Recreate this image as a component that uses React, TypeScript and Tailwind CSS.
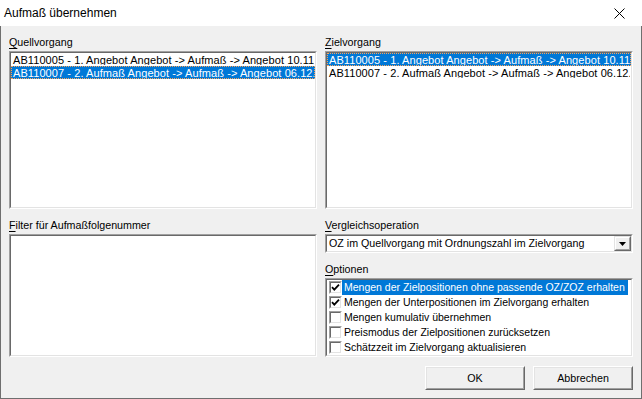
import React from "react";

function Sunken({ className = "", innerClassName = "", children }: { className?: string; innerClassName?: string; children?: React.ReactNode }) {
  return (
    <div className={"flex border border-t-[#a0a0a0] border-l-[#a0a0a0] border-b-white border-r-white " + className}>
      <div className={"flex-1 min-w-0 border border-t-[#696969] border-l-[#696969] border-b-[#e3e3e3] border-r-[#e3e3e3] bg-white overflow-hidden " + innerClassName}>
        {children}
      </div>
    </div>
  );
}

function Label({ first, rest }: { first: string; rest: string }) {
  return (
    <div className="h-[17px] leading-[16px] text-[10.7px] text-black whitespace-nowrap">
      <span className="underline underline-offset-[2px] decoration-1">{first}</span>
      {rest}
    </div>
  );
}

function ListRow({ text, selected }: { text: string; selected?: boolean }) {
  return (
    <div
      className={
        "h-[13px] leading-[12px] pl-[1px] whitespace-nowrap overflow-hidden text-[11px] tracking-[0.08px] border border-dotted " +
        (selected ? "bg-[#0078d7] text-white border-[#f7a35c]" : "text-black border-transparent")
      }
    >
      {text}
    </div>
  );
}

function CheckRow({ text, checked, selected }: { text: string; checked?: boolean; selected?: boolean }) {
  return (
    <div className="h-[15px] flex items-center">
      <div className="ml-[2px] w-[13px] h-[13px] flex border border-t-[#a0a0a0] border-l-[#a0a0a0] border-b-white border-r-white">
        <div className="flex-1 flex items-center justify-center border border-t-[#696969] border-l-[#696969] border-b-[#e3e3e3] border-r-[#e3e3e3] bg-white">
          {checked && (
            <svg width="9" height="9" viewBox="0 0 9 9">
              <polyline points="1,4.2 3.3,6.6 8,1.6" fill="none" stroke="#000" strokeWidth="1.8" />
            </svg>
          )}
        </div>
      </div>
      <div
        className={
          "h-[15px] leading-[15px] pl-[2px] pr-[3px] text-[10.5px] whitespace-nowrap " +
          (selected ? "bg-[#0078d7] text-white" : "text-black")
        }
      >
        {text}
      </div>
    </div>
  );
}

function Button({ children }: { children: React.ReactNode }) {
  return (
    <div className="w-[100px] h-[24px] flex border border-t-white border-l-white border-b-[#696969] border-r-[#696969]">
      <div className="flex-1 flex items-center justify-center border border-t-[#e3e3e3] border-l-[#e3e3e3] border-b-[#a0a0a0] border-r-[#a0a0a0] bg-[#f0f0f0] text-[10.7px] text-black">
        {children}
      </div>
    </div>
  );
}

export default function App() {
  return (
    <div className="w-[642px] h-[399px] flex flex-col font-['Liberation_Sans',Arial,sans-serif] bg-white select-none">
      {/* Title bar */}
      <div className="h-[26px] flex items-center justify-between bg-white">
        <div className="pl-[4px] text-[12px] leading-[16px] text-black">Aufmaß übernehmen</div>
        <div className="w-[46px] h-[26px] flex items-center justify-center">
          <svg width="11" height="11" viewBox="0 0 11 11">
            <path d="M0.5 0.5 L10.5 10.5 M10.5 0.5 L0.5 10.5" stroke="#000" strokeWidth="1" />
          </svg>
        </div>
      </div>

      {/* Body */}
      <div className="flex-1 flex flex-col bg-[#f0f0f0] border-l border-r border-b border-[#6f6f6f] px-[8px] pt-[8px] pb-[8px]">
        <div className="flex gap-[8px]">
          {/* Left column */}
          <div className="w-[308px] flex flex-col">
            <Label first="Q" rest="uellvorgang" />
            <Sunken className="h-[158px]">
              <ListRow text="AB110005 - 1. Angebot Angebot -> Aufmaß -> Angebot 10.11.2011" />
              <ListRow text="AB110007 - 2. Aufmaß Angebot -> Aufmaß -> Angebot 06.12.2011" selected />
            </Sunken>
            <div className="h-[8px]" />
            <Label first="F" rest="ilter für Aufmaßfolgenummer" />
            <Sunken className="h-[123px]" />
          </div>

          {/* Right column */}
          <div className="w-[308px] flex flex-col">
            <Label first="Z" rest="ielvorgang" />
            <Sunken className="h-[158px]">
              <ListRow text="AB110005 - 1. Angebot Angebot -> Aufmaß -> Angebot 10.11.2011" selected />
              <ListRow text="AB110007 - 2. Aufmaß Angebot -> Aufmaß -> Angebot 06.12.2011" />
            </Sunken>
            <div className="h-[8px]" />
            <Label first="V" rest="ergleichsoperation" />
            <Sunken className="h-[19px]" innerClassName="flex items-center">
              <div className="flex-1 pl-[2px] text-[10.7px] leading-[15px] text-black whitespace-nowrap overflow-hidden">
                OZ im Quellvorgang mit Ordnungszahl im Zielvorgang
              </div>
              <div className="w-[17px] h-[15px] flex border border-t-[#e3e3e3] border-l-[#e3e3e3] border-b-[#696969] border-r-[#696969]">
                <div className="flex-1 flex items-center justify-center border border-t-white border-l-white border-b-[#a0a0a0] border-r-[#a0a0a0] bg-[#f0f0f0]">
                  <svg width="7" height="4" viewBox="0 0 7 4">
                    <path d="M0 0 H7 L3.5 4 Z" fill="#000" />
                  </svg>
                </div>
              </div>
            </Sunken>
            <div className="h-[8px]" />
            <Label first="O" rest="ptionen" />
            <Sunken className="h-[79px]">
              <CheckRow text="Mengen der Zielpositionen ohne passende OZ/ZOZ erhalten" checked selected />
              <CheckRow text="Mengen der Unterpositionen im Zielvorgang erhalten" checked />
              <CheckRow text="Mengen kumulativ übernehmen" />
              <CheckRow text="Preismodus der Zielpositionen zurücksetzen" />
              <CheckRow text="Schätzzeit im Zielvorgang aktualisieren" />
            </Sunken>
          </div>
        </div>

        <div className="mt-[9px] flex justify-end gap-[8px]">
          <Button>OK</Button>
          <Button>Abbrechen</Button>
        </div>
      </div>
    </div>
  );
}
